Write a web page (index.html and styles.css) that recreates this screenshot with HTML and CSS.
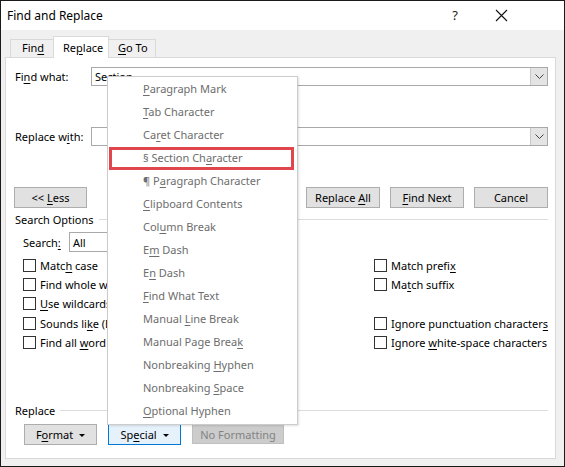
FILE: index.html
```html
<!DOCTYPE html>
<html>
<head>
<meta charset="utf-8">
<link rel="stylesheet" href="styles.css">
</head>
<body>
<div class="window">
  <div class="titlebar">
    <span class="title">Find and Replace</span>
    <span class="spacer"></span>
    <span class="help">?</span>
    <span class="close"><svg width="13" height="13" viewBox="0 0 13 13"><path d="M1 1L12 12M12 1L1 12" stroke="#111" stroke-width="1.1" fill="none"/></svg></span>
  </div>
  <div class="client">
    <div class="tabs">
      <div class="tab"><span>Fin<u>d</u></span></div>
      <div class="tab active"><span>Re<u>p</u>lace</span></div>
      <div class="tab"><span><u>G</u>o To</span></div>
    </div>
    <div class="panel">
      <div class="field-row first">
        <span class="label">Fi<u>n</u>d what:</span>
        <div class="combo wide"><span class="value">Section</span><span class="drop"><svg width="9" height="5" viewBox="0 0 9 5"><path d="M0.5 0.5L4.5 4.5L8.5 0.5" stroke="#444" fill="none"/></svg></span></div>
      </div>
      <div class="field-row second">
        <span class="label">Replace w<u>i</u>th:</span>
        <div class="combo wide"><span class="value"></span><span class="drop"><svg width="9" height="5" viewBox="0 0 9 5"><path d="M0.5 0.5L4.5 4.5L8.5 0.5" stroke="#444" fill="none"/></svg></span></div>
      </div>
      <div class="button-row">
        <button class="btn less">&lt;&lt; <u>L</u>ess</button>
        <span class="spacer"></span>
        <button class="btn">Replace <u>A</u>ll</button>
        <button class="btn"><u>F</u>ind Next</button>
        <button class="btn">Cancel</button>
      </div>
      <div class="group-head"><span>Search Options</span><span class="rule"></span></div>
      <div class="search-row">
        <span class="slabel">Search<u>:</u></span>
        <div class="combo small"><span class="value">All</span></div>
      </div>
      <div class="options">
        <div class="col left">
          <label class="chk"><span class="box"></span><span>Matc<u>h</u> case</span></label>
          <label class="chk"><span class="box"></span><span>Find whole words only</span></label>
          <label class="chk"><span class="box"></span><span><u>U</u>se wildcards</span></label>
          <label class="chk gap"><span class="box"></span><span>Sounds li<u>k</u>e (English)</span></label>
          <label class="chk"><span class="box"></span><span>Find all <u>w</u>ord forms (English)</span></label>
        </div>
        <div class="col right">
          <label class="chk"><span class="box"></span><span>Match prefi<u>x</u></span></label>
          <label class="chk"><span class="box"></span><span>Ma<u>t</u>ch suffix</span></label>
          <div class="chk"></div>
          <label class="chk gap"><span class="box"></span><span>Ignore punctuation character<u>s</u></span></label>
          <label class="chk"><span class="box"></span><span>Ignore <u>w</u>hite-space characters</span></label>
        </div>
      </div>
      <div class="group-head replace-head"><span>Replace</span><span class="rule"></span></div>
      <div class="bottom-row">
        <button class="btn fmt">F<u>o</u>rmat <span class="caret"></span></button>
        <button class="btn fmt special">Sp<u>e</u>cial <span class="caret"></span></button>
        <button class="btn nofmt" disabled>No Formatting</button>
      </div>
    </div>
  </div>
  <div class="menu">
    <div class="item"><span><u>P</u>aragraph Mark</span></div>
    <div class="item"><span><u>T</u>ab Character</span></div>
    <div class="item"><span>Ca<u>r</u>et Character</span></div>
    <div class="item selected"><span>§ Section Ch<u>a</u>racter</span></div>
    <div class="item"><span>¶ P<u>a</u>ragraph Character</span></div>
    <div class="item"><span><u>C</u>lipboard Contents</span></div>
    <div class="item"><span>Col<u>u</u>mn Break</span></div>
    <div class="item"><span>E<u>m</u> Dash</span></div>
    <div class="item"><span>E<u>n</u> Dash</span></div>
    <div class="item"><span><u>F</u>ind What Text</span></div>
    <div class="item"><span>Manual <u>L</u>ine Break</span></div>
    <div class="item"><span>Manual Page Brea<u>k</u></span></div>
    <div class="item"><span>Nonbreaking <u>H</u>yphen</span></div>
    <div class="item"><span>Nonbreaking <u>S</u>pace</span></div>
    <div class="item"><span><u>O</u>ptional Hyphen</span></div>
  </div>
</div>
</body>
</html>
```
FILE: styles.css
```css
* { box-sizing: border-box; }
html, body { margin: 0; padding: 0; }
body {
  font-family: "Noto Sans", "Open Sans", sans-serif;
  font-size: 11px;
  color: #000;
  background: #fff;
}
u { text-decoration-thickness: 1px; text-underline-offset: 2px; }
.window {
  position: relative;
  width: 565px;
  height: 467px;
  border: 1px solid #1a1a1a;
  display: flex;
  flex-direction: column;
  background: #f0f0f0;
}
.titlebar {
  height: 29px;
  background: #fff;
  display: flex;
  align-items: center;
  padding-left: 6px;
  padding-bottom: 1px;
}
.title { font-size: 12px; }
.spacer { flex: 1; }
.help { width: 30px; text-align: center; font-size: 13px; margin-right: 9px; color: #222; }
.close { width: 45px; display: flex; justify-content: center; margin-right: 40px; }
.client {
  flex: 1;
  padding: 6px 8px 7px 4px;
  display: flex;
  flex-direction: column;
}
.tabs {
  display: flex;
  align-items: flex-end;
  padding-left: 5px;
  height: 21px;
}
.tab {
  height: 18px;
  border: 1px solid #d9d9d9;
  border-bottom: none;
  background: #f0f0f0;
  display: flex;
  align-items: center;
  white-space: nowrap;
  padding-bottom: 2px;
}
.tab:first-child { border-right: none; width: 43px; padding-left: 11px; }
.tab:last-child { border-left: none; width: 47px; padding-left: 9px; }
.tab.active {
  height: 22px;
  background: #fff;
  width: 56px;
  padding: 0 0 1px 9px;
  margin-bottom: -1px;
  position: relative;
  z-index: 1;
}
.panel {
  flex: 1;
  background: #fff;
  border: 1px solid #d9d9d9;
  display: flex;
  flex-direction: column;
  padding: 0 7px 0 8px;
}
.field-row { display: flex; align-items: center; height: 19px; }
.field-row.first { margin-top: 9px; }
.field-row.second { margin-top: 41px; }
.label { width: 77px; padding-left: 1px; }
.combo {
  height: 19px;
  border: 1px solid #a9a9a9;
  display: flex;
  align-items: center;
  background: #fff;
}
.combo.wide { flex: 1; }
.combo .value { flex: 1; padding-left: 3px; }
.drop {
  width: 17px;
  height: 17px;
  background: #e4e4e4;
  border-left: 1px solid #c8c8c8;
  display: flex;
  align-items: center;
  justify-content: center;
}
.button-row {
  display: flex;
  margin-top: 41px;
  gap: 10px;
}
.btn {
  font-family: inherit;
  font-size: 11px;
  height: 21px;
  width: 74px;
  background: #e1e1e1;
  border: 1px solid #adadad;
  color: #000;
  padding: 0;
  line-height: 1;
}
.btn.less { width: 73px; }
.group-head {
  display: flex;
  align-items: center;
  margin-top: 4px;
  height: 14px;
  padding-left: 1px;
}
.group-head .rule { flex: 1; height: 1px; background: #dcdcdc; margin-left: 5px; margin-top: 1px; }
.search-row {
  display: flex;
  align-items: center;
  margin-top: 6px;
  padding-left: 9px;
  height: 20px;
}
.slabel { width: 46px; }
.combo.small { width: 80px; height: 20px; }
.options {
  display: flex;
  margin-top: 4px;
  padding-left: 9px;
}
.col { display: flex; flex-direction: column; }
.col.left { width: 351px; flex-shrink: 0; }
.chk {
  height: 19px;
  display: flex;
  align-items: center;
  white-space: nowrap;
}
.chk.gap { height: 20px; }
.box {
  width: 13px;
  height: 13px;
  border: 1px solid #333;
  margin-right: 4px;
  background: #fff;
  flex-shrink: 0;
}
.replace-head { margin-top: 51px; }
.bottom-row {
  display: flex;
  gap: 11px;
  margin-top: 7px;
  padding-left: 10px;
}
.btn.fmt { width: 73px; height: 21px; }
.btn.special { background: #e5f1fb; border-color: #0078d7; }
.btn.nofmt { width: 92px; background: #cccccc; border-color: #bfbfbf; color: #838383; height: 20px; }
.caret {
  display: inline-block;
  width: 0; height: 0;
  border-left: 3px solid transparent;
  border-right: 3px solid transparent;
  border-top: 3px solid #000;
  vertical-align: middle;
  margin-left: 3px;
  margin-bottom: 2px;
}
.menu {
  position: absolute;
  left: 106px;
  top: 75px;
  width: 191px;
  background: #fff;
  border: 1px solid #cccccc;
  box-shadow: 1px 1px 2px rgba(0,0,0,0.12);
  padding: 1px 2px 1px 1px;
  z-index: 5;
}
.item {
  height: 23px;
  display: flex;
  align-items: center;
  padding-left: 34px;
  padding-bottom: 2px;
  color: #6d6d6d;
  white-space: nowrap;
}
.item.selected {
  border: 3px solid #e0474c;
  padding-left: 31px;
  margin-right: 1px;
}
```
